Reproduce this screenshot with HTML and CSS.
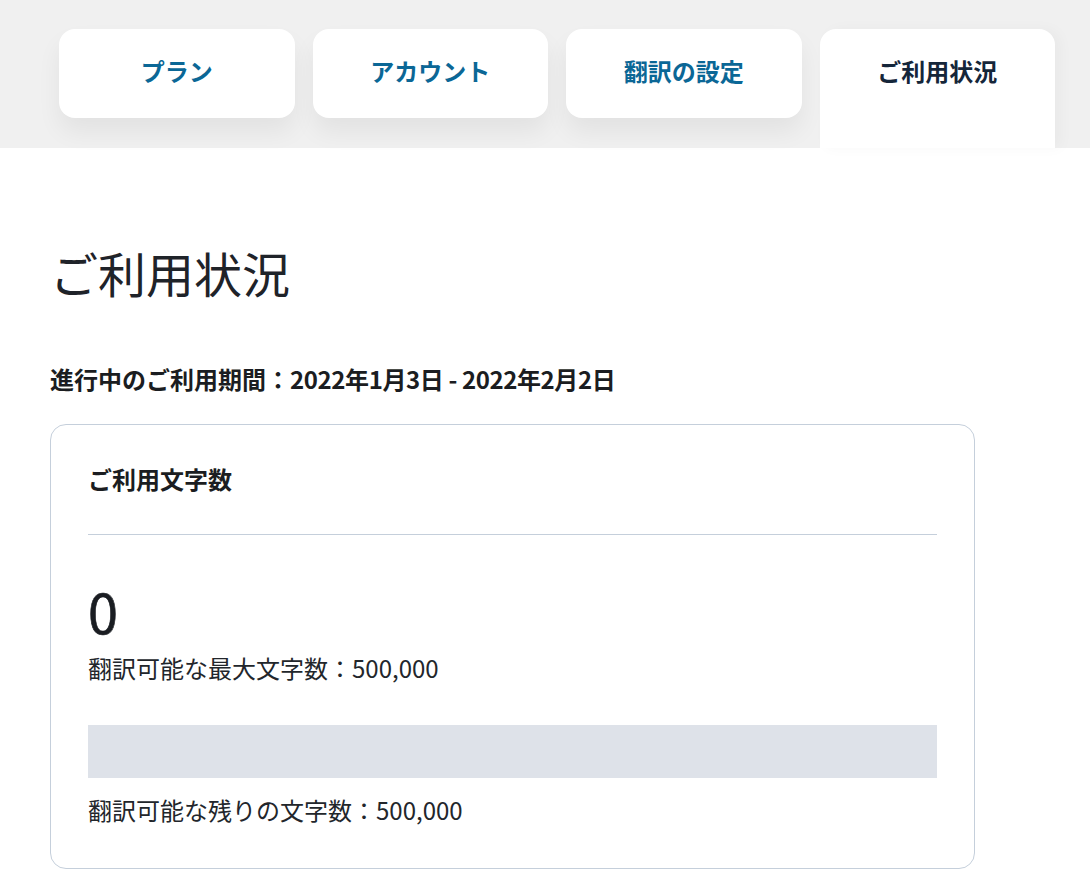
FILE: index.html
```html
<!DOCTYPE html>
<html lang="ja">
<head>
<meta charset="utf-8">
<title>ご利用状況</title>
<link rel="stylesheet" href="styles.css">
</head>
<body>
  <nav class="tabbar">
    <a class="tab" href="#">プラン</a>
    <a class="tab" href="#">アカウント</a>
    <a class="tab" href="#">翻訳の設定</a>
    <a class="tab tab-active" href="#">ご利用状況</a>
  </nav>

  <main class="content">
    <h1 class="page-title">ご利用状況</h1>
    <p class="period">進行中のご利用期間：<span class="dates">2022年1月3日 - 2022年2月2日</span></p>

    <section class="usage-card">
      <h2 class="card-title">ご利用文字数</h2>
      <hr class="divider">
      <div class="usage-count">0</div>
      <p class="usage-max">翻訳可能な最大文字数：500,000</p>
      <div class="meter"><div class="meter-fill" style="width: 0%"></div></div>
      <p class="usage-left">翻訳可能な残りの文字数：500,000</p>
    </section>
  </main>
</body>
</html>
```

FILE: styles.css
```css
* {
  box-sizing: border-box;
}

html, body {
  margin: 0;
  padding: 0;
  background: #ffffff;
}

body {
  font-family: "Noto Sans CJK JP", "Noto Sans", sans-serif;
  color: #1f2329;
}

/* top navigation */
.tabbar {
  display: flex;
  align-items: flex-start;
  gap: 18px;
  height: 148px;
  padding: 29px 35px 0 59px;
  background: #f0f0f0;
}

.tab {
  flex: 1 1 0;
  display: block;
  padding: 30px 0 35px;
  font-size: 24px;
  line-height: 24px;
  font-weight: 700;
  text-align: center;
  text-decoration: none;
  color: #0b6796;
  background: #ffffff;
  border-radius: 16px;
  box-shadow: 0 14px 24px rgba(0, 0, 0, 0.06);
}

.tab-active {
  padding-bottom: 65px;
  border-radius: 16px 16px 0 0;
  color: #15263a;
  box-shadow: 6px 0 14px rgba(0, 0, 0, 0.03);
}

/* page body */
.content {
  padding: 0 50px 40px;
}

.page-title {
  margin: 100px 0 0;
  font-size: 48px;
  line-height: 48px;
  font-weight: 400;
  color: #1f2329;
}

.period {
  margin: 71px 0 0;
  font-size: 24px;
  line-height: 24px;
  font-weight: 700;
  color: #1b1d21;
}

.dates {
  letter-spacing: -0.4px;
}

.usage-card {
  width: 925px;
  margin-top: 33px;
  padding: 42px 37px 46px;
  border: 1px solid #c5cfdb;
  border-radius: 16px;
}

.card-title {
  margin: 0;
  font-size: 24px;
  line-height: 24px;
  font-weight: 700;
  color: #1b1d21;
}

.divider {
  margin: 43px 0 0;
  border: 0;
  border-top: 1px solid #c5cfdb;
  height: 0;
}

.usage-count {
  margin-top: 49px;
  font-size: 54px;
  line-height: 54px;
  color: #1a1d22;
  -webkit-text-stroke: 0.6px #1a1d22;
}

.usage-max,
.usage-left {
  margin: 0;
  font-size: 24px;
  line-height: 24px;
  font-weight: 400;
  color: #22262b;
}

.usage-max {
  margin-top: 18px;
}

.meter {
  height: 53px;
  margin-top: 45px;
  background: #dee2e9;
}

.meter-fill {
  height: 100%;
  background: #0b6796;
}

.usage-left {
  margin-top: 20px;
}
```
